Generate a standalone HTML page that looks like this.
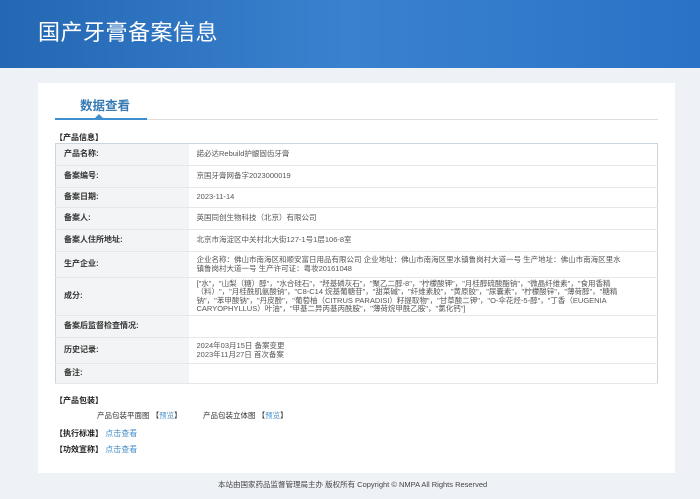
<!DOCTYPE html>
<html><head><meta charset="utf-8"><style>
*{margin:0;padding:0;box-sizing:border-box}
body{width:700px;height:499px;overflow:hidden;background:#eef1f5;font-family:"Liberation Sans","Noto Sans CJK SC",sans-serif;position:relative;color:#333}
.hd{position:absolute;left:0;top:0;width:700px;height:68px;background:linear-gradient(90deg,#2467b3 0%,#3a82cf 50%,#2a72c6 100%)}
.hd h1{position:absolute;left:38px;top:15px;font-size:22px;font-weight:normal;color:#fff;letter-spacing:0.5px}
.card{position:absolute;left:38px;top:83px;width:637px;height:390px;background:#fff}
.tab{position:absolute;left:80px;top:95px;font-size:12.5px;color:#3579b5;font-weight:bold}
.line{position:absolute;left:55px;top:119px;width:603px;height:1px;background:#ddd}
.bl{position:absolute;left:55px;top:118px;width:92px;height:2px;background:#3d8fd0}
.tri{position:absolute;left:95px;top:114px;width:0;height:0;border-left:4px solid transparent;border-right:4px solid transparent;border-bottom:4px solid #3d8fd0}
.sec{position:absolute;font-size:8px;font-weight:bold;color:#222}
table{position:absolute;left:55px;top:143px;width:603px;border-collapse:collapse;border:1.5px solid #ccd4dc;font-size:7.5px}
td{border-bottom:1px solid #e4e8ec;padding:0 8px;vertical-align:middle;line-height:8.5px}
td.l{width:133px;background:#f3f4f6;font-weight:bold;color:#333;font-size:8px}
td.v{color:#555;padding-right:30px}
.t{position:absolute;font-size:7.5px;color:#333}
a{color:#4a90c8;text-decoration:none}
.ft{position:absolute;left:0;top:473px;width:700px;height:26px;background:#eef1f5;font-size:7.5px;color:#444}
.ft span{position:absolute;left:218px;top:6px}
</style></head><body>
<div class="hd"><h1>国产牙膏备案信息</h1></div>
<div class="card"></div>
<div class="tab">数据查看</div>
<div class="line"></div><div class="bl"></div><div class="tri"></div>
<div class="sec" style="left:55px;top:132px">【产品信息】</div>
<table>
<tr style="height:22px"><td class="l">产品名称:</td><td class="v">諾必达Rebuild护龈固齿牙膏</td></tr>
<tr style="height:22px"><td class="l">备案编号:</td><td class="v">京国牙膏网备字2023000019</td></tr>
<tr style="height:20px"><td class="l">备案日期:</td><td class="v">2023-11-14</td></tr>
<tr style="height:22px"><td class="l">备案人:</td><td class="v">英国同创生物科技（北京）有限公司</td></tr>
<tr style="height:22px"><td class="l">备案人住所地址:</td><td class="v">北京市海淀区中关村北大街127-1号1层106-8室</td></tr>
<tr style="height:26px"><td class="l">生产企业:</td><td class="v">企业名称：佛山市南海区和顺安富日用品有限公司 企业地址：佛山市南海区里水镇鲁岗村大道一号 生产地址：佛山市南海区里水镇鲁岗村大道一号 生产许可证：粤妆20161048</td></tr>
<tr style="height:38px"><td class="l">成分:</td><td class="v">["水"，"山梨（糖）醇"，"水合硅石"，"羟基磷灰石"，"聚乙二醇-8"，"柠檬酸钾"，"月桂醇硫酸酯钠"，"微晶纤维素"，"食用香精（料）"，"月桂酰肌氨酸钠"，"C8-C14 烷基葡糖苷"，"甜菜碱"，"纤维素胶"，"黄原胶"，"尿囊素"，"柠檬酸锌"，"薄荷醇"，"糖精钠"，"苯甲酸钠"，"丹皮酚"，"葡萄柚（CITRUS PARADISI）籽提取物"，"甘草酸二钾"，"O-伞花烃-5-醇"，"丁香（EUGENIA CARYOPHYLLUS）叶油"，"甲基二异丙基丙酰胺"，"薄荷烷甲酰乙胺"，"氯化钙"]</td></tr>
<tr style="height:22px"><td class="l">备案后监督检查情况:</td><td class="v"></td></tr>
<tr style="height:26px"><td class="l">历史记录:</td><td class="v">2024年03月15日 备案变更<br>2023年11月27日 首次备案</td></tr>
<tr style="height:20px"><td class="l">备注:</td><td class="v"></td></tr>
</table>
<div class="sec" style="left:55px;top:395px">【产品包装】</div>
<div class="t" style="left:97px;top:410px">产品包装平面图 【<a>预览</a>】</div>
<div class="t" style="left:203px;top:410px">产品包装立体图 【<a>预览</a>】</div>
<div class="sec" style="left:55px;top:428px">【执行标准】 <a style="font-weight:normal">点击查看</a></div>
<div class="sec" style="left:55px;top:444px">【功效宣称】 <a style="font-weight:normal">点击查看</a></div>
<div class="ft"><span>本站由国家药品监督管理局主办 版权所有 Copyright © NMPA All Rights Reserved</span></div>
</body></html>
